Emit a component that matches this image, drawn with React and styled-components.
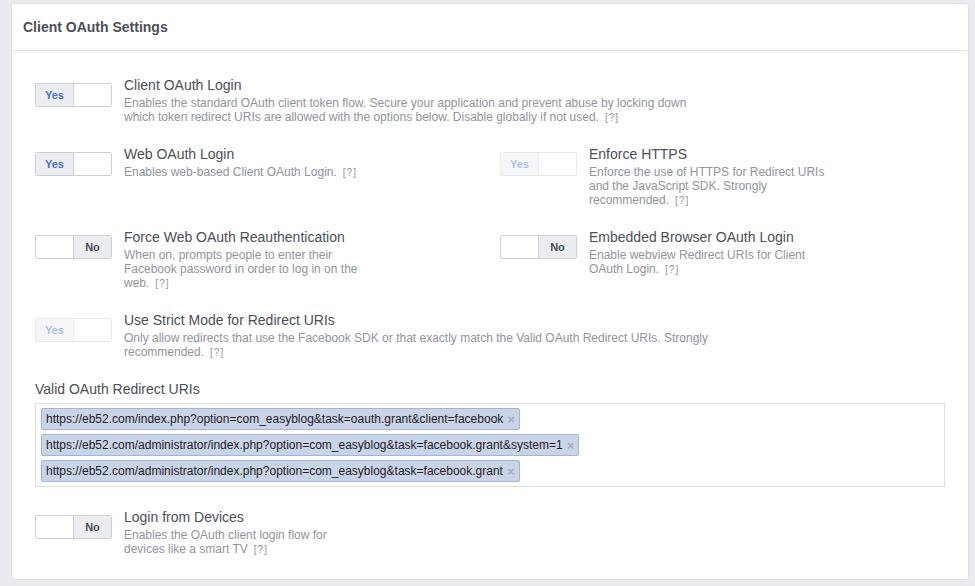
import React from "react";
import styled, { createGlobalStyle } from "styled-components";

const Global = createGlobalStyle`
  html, body { margin: 0; padding: 0; background: #e9ebee; }
  body { font-family: "Liberation Sans", Arial, Helvetica, sans-serif; }
  * { box-sizing: border-box; }
`;

const Page = styled.div`
  padding: 3px 6px 6px 11px;
`;

const Card = styled.section`
  background: #fff;
  border: 1px solid #dddfe2;
  border-radius: 3px;
`;

const Header = styled.header`
  height: 47px;
  border-bottom: 1px solid #e5e5e5;
  display: flex;
  align-items: center;
  padding: 0 11px;
  font-size: 14px;
  font-weight: bold;
  color: #4b4f56;
`;

const Body = styled.div`
  padding: 25px 23px 23px 23px;
  display: grid;
  grid-template-columns: 465px 1fr;
  row-gap: 21px;
`;

const Row = styled.div`
  display: flex;
  align-items: flex-start;
  gap: 12px;
  grid-column: ${(p) => (p.$full ? "1 / -1" : "auto")};
`;

const ToggleBox = styled.div`
  flex: none;
  margin-top: 7px;
  width: 77px;
  height: 24px;
  border: 1px solid #ccd0d5;
  border-radius: 2px;
  display: flex;
  background: #fff;
  opacity: ${(p) => (p.$disabled ? 0.45 : 1)};
`;

const Half = styled.div`
  flex: 1;
  display: flex;
  align-items: center;
  justify-content: center;
  font-size: 11px;
  font-weight: bold;
  background: ${(p) => (p.$active ? "#ebedf0" : "#fff")};
  color: ${(p) => (p.$yes ? "#4c6fd8" : "#4b4f56")};
  border-left: ${(p) => (p.$sep ? "1px solid #ccd0d5" : "none")};
`;

const Text = styled.div`
  display: flex;
  flex-direction: column;
`;

const Title = styled.div`
  font-size: 14px;
  line-height: 18px;
  color: #4b4f56;
`;

const Desc = styled.div`
  margin-top: 2px;
  font-size: 12px;
  line-height: 14px;
  color: #90949c;
  max-width: ${(p) => (p.$wide ? "590px" : "240px")};
`;

const Help = styled.span`
  font-size: 10px;
  line-height: 1;
  letter-spacing: 1px;
  margin-left: 6px;
  color: #90949c;
`;

const Field = styled.div`
  grid-column: 1 / -1;
  display: flex;
  flex-direction: column;
`;

const Label = styled.div`
  font-size: 14px;
  line-height: 18px;
  color: #4b4f56;
  margin-bottom: 5px;
`;

const TokenBox = styled.div`
  border: 1px solid #dddfe2;
  padding: 4px 5px;
  display: flex;
  flex-direction: column;
  align-items: flex-start;
  gap: 4px;
`;

const Token = styled.div`
  height: 22px;
  display: flex;
  align-items: center;
  padding: 0 4px 0 4px;
  background: #cad4e7;
  border: 1px solid #a3b5d6;
  border-radius: 2px;
  font-size: 12px;
  color: #1d2129;
`;

const Remove = styled.span`
  margin-left: 4px;
  font-size: 13px;
  font-weight: bold;
  color: #a2adc0;
`;

function Toggle({ on, disabled }) {
  return (
    <ToggleBox $disabled={disabled}>
      {on ? (
        <>
          <Half $active $yes>Yes</Half>
          <Half $sep />
        </>
      ) : (
        <>
          <Half />
          <Half $active $sep>No</Half>
        </>
      )}
    </ToggleBox>
  );
}

function Setting({ on, disabled, title, children, full, wide }) {
  return (
    <Row $full={full}>
      <Toggle on={on} disabled={disabled} />
      <Text>
        <Title>{title}</Title>
        <Desc $wide={wide}>
          {children}
          <Help>[?]</Help>
        </Desc>
      </Text>
    </Row>
  );
}

const uris = [
  "https://eb52.com/index.php?option=com_easyblog&task=oauth.grant&client=facebook",
  "https://eb52.com/administrator/index.php?option=com_easyblog&task=facebook.grant&system=1",
  "https://eb52.com/administrator/index.php?option=com_easyblog&task=facebook.grant",
];

export default function App() {
  return (
    <>
      <Global />
      <Page>
        <Card>
          <Header>Client OAuth Settings</Header>
          <Body>
            <Setting on full wide title="Client OAuth Login">
              Enables the standard OAuth client token flow. Secure your application and prevent abuse by locking down which token redirect URIs are allowed with the options below. Disable globally if not used.
            </Setting>
            <Setting on title="Web OAuth Login">
              Enables web-based Client OAuth Login.
            </Setting>
            <Setting on disabled title="Enforce HTTPS">
              Enforce the use of HTTPS for Redirect URIs and the JavaScript SDK. Strongly recommended.
            </Setting>
            <Setting title="Force Web OAuth Reauthentication">
              When on, prompts people to enter their Facebook password in order to log in on the web.
            </Setting>
            <Setting title="Embedded Browser OAuth Login">
              Enable webview Redirect URIs for Client OAuth Login.
            </Setting>
            <Setting on disabled full wide title="Use Strict Mode for Redirect URIs">
              Only allow redirects that use the Facebook SDK or that exactly match the Valid OAuth Redirect URIs. Strongly recommended.
            </Setting>
            <Field>
              <Label>Valid OAuth Redirect URIs</Label>
              <TokenBox>
                {uris.map((u) => (
                  <Token key={u}>
                    {u}
                    <Remove>×</Remove>
                  </Token>
                ))}
              </TokenBox>
            </Field>
            <Setting title="Login from Devices">
              Enables the OAuth client login flow for devices like a smart TV
            </Setting>
          </Body>
        </Card>
      </Page>
    </>
  );
}
